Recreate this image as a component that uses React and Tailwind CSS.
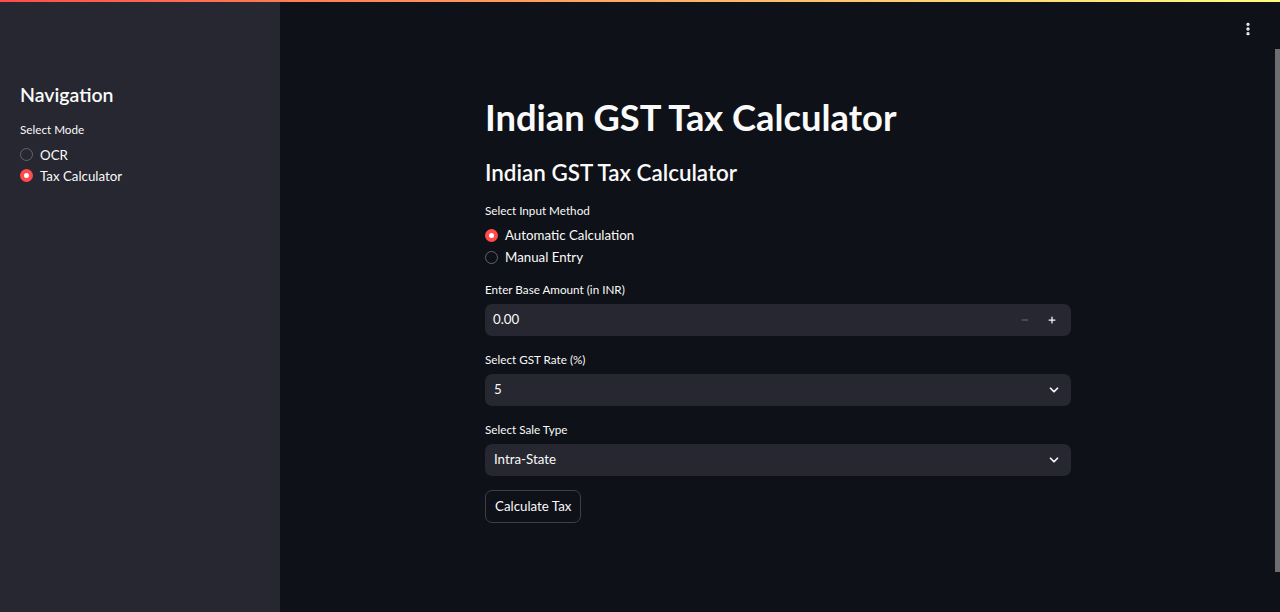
import React from 'react';
import { ChevronDown, Minus, Plus, EllipsisVertical } from 'lucide-react';

function Radio({ label, checked, tall }) {
    return (
        <label className={`flex items-center gap-[7px] ${tall ? 'h-[22px]' : 'h-[21px]'}`}>
            {checked ? (
                <span className="w-[13px] h-[13px] rounded-full bg-[#ff4b4b] flex items-center justify-center">
                    <span className="w-[5px] h-[5px] rounded-full bg-white" />
                </span>
            ) : (
                <span className="w-[13px] h-[13px] rounded-full border border-[#63646d]" />
            )}
            <span className="text-[13.3px] leading-[18px] text-[#fafafa]">{label}</span>
        </label>
    );
}

function FieldLabel({ children, mb = 'mb-[7px]' }) {
    return <div className={`text-[11.7px] leading-[16px] text-[#fafafa] ${mb}`}>{children}</div>;
}

function SelectBox({ value }) {
    return (
        <div className="h-[32px] rounded-[7px] bg-[#262730] flex items-center justify-between pl-[9px] pr-[10px]">
            <span className="text-[13.3px] text-[#fafafa]">{value}</span>
            <ChevronDown className="w-[14px] h-[14px] text-[#fafafa]" strokeWidth={3} />
        </div>
    );
}

export default function App() {
    return (
        <div className="h-[612px] w-[1280px] flex flex-col bg-[#0e1117] overflow-hidden relative" style={{ fontFamily: 'Lato, "Open Sans", sans-serif' }}>
            {/* top decoration */}
            <div className="h-[2px] bg-gradient-to-r from-[#ff4b4b] to-[#fffd80]" />
            <div className="flex flex-1">
                {/* sidebar */}
                <aside className="w-[280px] bg-[#262730] px-[20px] pt-[80px]">
                    <h2 className="text-[19.5px] font-semibold text-[#fafafa] leading-[26px]">Navigation</h2>
                    <div className="mt-[13px]">
                        <FieldLabel mb="mb-[7px]">Select Mode</FieldLabel>
                        <Radio label="OCR" />
                        <Radio label="Tax Calculator" checked />
                    </div>
                </aside>

                {/* main */}
                <main className="flex-1 flex justify-center pr-[4px]">
                    <div className="w-[586px] pt-[93px]">
                        <h1 className="text-[36.3px] font-bold text-[#fafafa] leading-[44px]">Indian GST Tax Calculator</h1>
                        <h3 className="text-[22.4px] font-semibold text-[#fafafa] leading-[30px] mt-[19px]">Indian GST Tax Calculator</h3>

                        <div className="mt-[14px]">
                            <FieldLabel mb="mb-[6px]">Select Input Method</FieldLabel>
                            <Radio label="Automatic Calculation" checked tall />
                            <Radio label="Manual Entry" tall />
                        </div>

                        <div className="mt-[13px]">
                            <FieldLabel>Enter Base Amount (in INR)</FieldLabel>
                            <div className="h-[32px] rounded-[7px] bg-[#262730] flex items-center justify-between pl-[8px] pr-[6px]">
                                <span className="text-[13.3px] text-[#fafafa]">0.00</span>
                                <div className="flex items-center">
                                    <span className="w-[27px] flex justify-center"><Minus className="w-[10px] h-[10px] text-[#6b6c75]" strokeWidth={2.5} /></span>
                                    <span className="w-[27px] flex justify-center"><Plus className="w-[10px] h-[10px] text-[#fafafa]" strokeWidth={3} /></span>
                                </div>
                            </div>
                        </div>

                        <div className="mt-[15px]">
                            <FieldLabel>Select GST Rate (%)</FieldLabel>
                            <SelectBox value="5" />
                        </div>

                        <div className="mt-[15px]">
                            <FieldLabel>Select Sale Type</FieldLabel>
                            <SelectBox value="Intra-State" />
                        </div>

                        <button className="mt-[14px] h-[33px] px-[9px] rounded-[7px] border border-[#3d3f4a] bg-[#0e1117] text-[13.3px] text-[#fafafa]">
                            Calculate Tax
                        </button>
                    </div>
                </main>
            </div>

            {/* toolbar menu */}
            <button className="absolute top-[21px] right-[24px] text-[#fafafa]">
                <EllipsisVertical className="w-[16px] h-[16px]" strokeWidth={3} />
            </button>

            {/* scrollbar thumb */}
            <div className="absolute right-0 top-[49px] w-[5px] h-[523px] bg-[#6e6e70]" />
        </div>
    );
}
